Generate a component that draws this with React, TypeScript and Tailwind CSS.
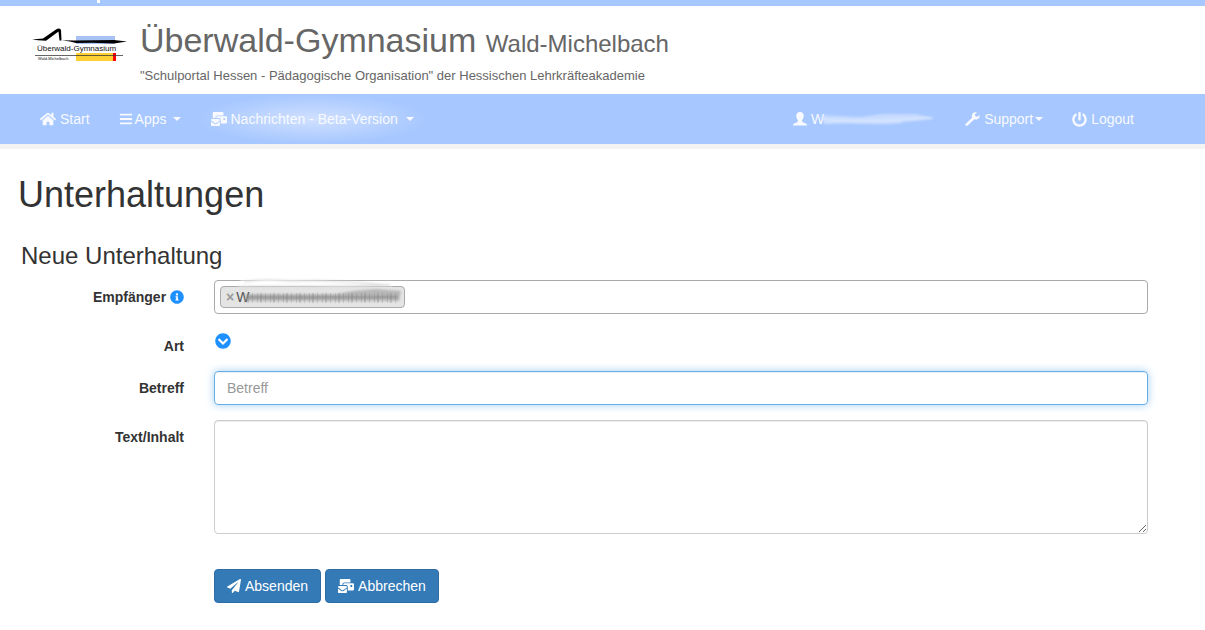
import {
  FaBars,
  FaChevronCircleDown,
  FaHome,
  FaInfoCircle,
  FaMailBulk,
  FaPaperPlane,
  FaPowerOff,
} from "react-icons/fa";

const navLink = "flex h-[50px] items-center whitespace-nowrap hover:underline";
const formLabel = "w-[184px] shrink-0 pt-[7px] text-right font-bold";
const button =
  "flex h-[34px] items-center gap-1 rounded border border-[#2e6da4] bg-[#337ab7] px-3 text-white hover:bg-[#286090]";

function Caret() {
  return (
    <span
      className="border-x-4 border-t-4 border-x-transparent border-t-current"
      aria-hidden
    />
  );
}

function SchoolLogo() {
  return (
    <svg
      viewBox="0 0 96 38"
      className="h-[38px] w-[96px] shrink-0"
      role="img"
      aria-label="Überwald-Gymnasium"
    >
      <rect x="44" y="9" width="39" height="8" fill="#a6c1f2" />
      <rect x="44" y="26" width="39" height="8" fill="#ffd034" />
      <rect x="81" y="26" width="3" height="8" fill="#f00" />
      <path d="M0 12.500 L11 11.500 L24 2.500 Q27.500 0.500 29 3 L29.500 13.500 L27.500 13.500 L26.500 4.500 L14 13.800 L6 13.300 Z" />
      <path d="M30 13.200 L43 13.500 L82 13 L95 14.500 L82 16.500 L60 15.800 L44 16 L38 14.600 Z" />
      <path d="M3 28.500 H91" stroke="#333" strokeWidth="1" opacity=".75" />
      <text x="5" y="24" fontSize="8" fontFamily="Liberation Sans" fill="#111">
        Überwald-Gymnasium
      </text>
      <text x="6" y="33" fontSize="4" fontFamily="Liberation Sans" fill="#111">
        Wald-Michelbach
      </text>
    </svg>
  );
}

function UserIcon() {
  return (
    <svg viewBox="0 0 14 14" className="size-[14px]" fill="currentColor" aria-hidden>
      <path d="M7 0C4.600 0 3.300 1.400 3.300 3.700c0 1.900.6 3.400 1.600 4.400v1.100c0 .5-.3.800-.8 1L1 11.600C.3 12 0 12.400 0 13v.6h14V13c0-.6-.3-1-1-1.400l-3.100-1.400c-.5-.2-.8-.5-.8-1V8.100c1-1 1.600-2.500 1.600-4.400C10.700 1.400 9.400 0 7 0Z" />
    </svg>
  );
}

function WrenchIcon() {
  return (
    <svg viewBox="0 0 15 14" className="mr-1 h-[14px] w-[15px]" fill="currentColor" aria-hidden>
      <path d="M.5 11.900 7 5.700C6.300 3.500 7.200 1.300 9.100.5c1-.4 2-.4 2.800-.1L9.900 2.300l.4 2 2.100.5 2.100-1.900c.4 1.700-.2 3.300-1.600 4.100-1.100.7-2.400.7-3.600.3L2.700 13.600c-.5.500-1.300.5-1.800 0l-.4-.4c-.4-.4-.4-.9 0-1.300Z" />
    </svg>
  );
}

function NavSmudge() {
  return (
    <svg viewBox="0 0 116 16" className="-ml-1 h-4 w-[116px]" fill="none" aria-hidden>
      <defs>
        <filter id="navBlur" x="-10%" y="-50%" width="120%" height="200%">
          <feGaussianBlur stdDeviation="1" />
        </filter>
      </defs>
      <g filter="url(#navBlur)">
        <path
          d="M0 4 L40 6 L62 3 L96 3 L115 7 L96 10 L62 13 L30 12 L4 12 Z"
          fill="#d4e3ff"
          opacity=".7"
        />
        <path d="M2 8 C30 11 60 9 112 7" stroke="#d8e6ff" strokeWidth="2" />
        <path d="M4 12 C35 10 55 13 82 11" stroke="#d0e1ff" strokeWidth="2" />
      </g>
    </svg>
  );
}

function RecipientSmudge() {
  return (
    <svg
      viewBox="0 0 178 34"
      className="pointer-events-none absolute -top-[9px] left-[15px] h-[34px] w-[178px]"
      fill="none"
      aria-hidden
    >
      <defs>
        <filter id="tagBlur" x="-5%" y="-50%" width="110%" height="200%">
          <feGaussianBlur stdDeviation="1" />
        </filter>
      </defs>
      <g filter="url(#tagBlur)">
        <path d="M4 5 C45 0 105 8 156 6" stroke="#fff" strokeWidth="4" />
        <path d="M8 4 C35 -1 48 4 65 3 S120 4 150 7" stroke="#ccc" strokeWidth="1" />
        <path d="M2 9 C40 8 90 10 154 7" stroke="#dcdcdc" strokeWidth="2" />
        <path
          d="M10 16 L100 16 L118 13 L140 11 L165 13 L163 23 L120 23 L10 23 Z"
          fill="#a4a4a4"
          opacity=".7"
        />
        <path d="M10 19 C50 20 90 19 162 19" stroke="#777" strokeWidth="2" opacity=".6" />
      </g>
      <path
        d="M8 20 H164"
        stroke="#777"
        strokeWidth="10"
        strokeDasharray="1 2 2 3 1 4"
        opacity=".25"
      />
    </svg>
  );
}

export default function App() {
  return (
    <div className="min-h-screen bg-white font-['Liberation_Sans',Arial,sans-serif] text-sm text-[#333]">
      <div className="h-1.5 bg-[#a6c7ff] pl-[97px]">
        <div className="h-[3px] w-[3px] bg-white" />
      </div>

      <header className="flex h-[88px] gap-3 pl-8 text-[#666]">
        <div className="pt-[21px]">
          <SchoolLogo />
        </div>
        <div className="pt-[14px]">
          <h1 className="text-[34px] leading-10 whitespace-nowrap">
            Überwald-Gymnasium{" "}
            <small className="text-2xl leading-8">Wald-Michelbach</small>
          </h1>
          <p className="pt-1.5 text-[13px] leading-5">
            "Schulportal Hessen - Pädagogische Organisation" der Hessischen
            Lehrkräfteakademie
          </p>
        </div>
      </header>

      <nav className="flex justify-between border-b-[5px] border-[#f3f3f3] bg-[#a6c7ff] pr-[71px] pl-10 text-[#f8faff]">
        <div className="flex">
          <a href="#start" className={`${navLink} mr-[29px] gap-1`}>
            <FaHome className="size-4" />
            Start
          </a>
          <a href="#apps" className={`${navLink} mr-[15px] gap-1.5`}>
            <span className="flex items-center gap-[2px]">
              <FaBars className="size-[14px]" />
              Apps
            </span>
            <Caret />
          </a>
          <a
            href="#nachrichten"
            className={`${navLink} gap-2 bg-[radial-gradient(closest-side,#d0e0ff,#a6c7ff)] px-[15px]`}
          >
            <span className="flex items-center gap-1">
              <FaMailBulk className="size-4" />
              Nachrichten - Beta-Version
            </span>
            <Caret />
          </a>
        </div>
        <div className="flex gap-[29px]">
          <a href="#profil" className={`${navLink} gap-1`}>
            <UserIcon />
            <span className="flex items-center">
              W
              <NavSmudge />
            </span>
          </a>
          <a href="#support" className={navLink}>
            <WrenchIcon />
            Support
            <span className="ml-0.5 flex">
              <Caret />
            </span>
          </a>
          <a href="#logout" className={`${navLink} gap-1`}>
            <FaPowerOff className="size-[15px]" />
            Logout
          </a>
        </div>
      </nav>

      <main className="pt-[26px] pr-[57px]">
        <h1 className="pl-[18px] text-4xl leading-10">Unterhaltungen</h1>
        <h2 className="pt-7 pl-[21px] text-2xl leading-[26px]">
          Neue Unterhaltung
        </h2>

        <form className="pt-[11px]" onSubmit={(e) => e.preventDefault()}>
          <div className="flex gap-[30px]">
            <label htmlFor="empfaenger" className={formLabel}>
              Empfänger{" "}
              <FaInfoCircle className="inline size-[14px] align-[-2px] text-[#1e90ff]" />
            </label>
            <div className="flex h-[34px] flex-1 items-center rounded border border-[#aaa] pl-[5px]">
              <span className="relative flex h-[22px] w-[185px] items-center rounded border border-[#aaa] bg-[#e4e4e4] pl-[5px] text-[#555]">
                <button
                  type="button"
                  aria-label="Entfernen"
                  className="mr-0.5 font-bold text-[#999]"
                >
                  ×
                </button>
                W
                <RecipientSmudge />
              </span>
              <input
                id="empfaenger"
                type="search"
                className="min-w-0 flex-1 px-1 outline-none"
              />
            </div>
          </div>

          <div className="flex gap-[30px] pt-[15px]">
            <span className={formLabel}>Art</span>
            <button
              type="button"
              aria-label="Art auswählen"
              className="mt-1 ml-px size-4 text-[#1e90ff]"
            >
              <FaChevronCircleDown className="size-4" />
            </button>
          </div>

          <div className="flex gap-[30px] pt-[15px]">
            <label htmlFor="betreff" className={formLabel}>
              Betreff
            </label>
            <input
              id="betreff"
              type="text"
              placeholder="Betreff"
              autoFocus
              className="h-[34px] min-w-0 flex-1 rounded border border-[#66afe9] px-3 shadow-[inset_0_1px_1px_rgba(0,0,0,0.075),0_0_8px_rgba(102,175,233,0.6)] outline-none placeholder:text-[#999]"
            />
          </div>

          <div className="flex gap-[30px] pt-[15px]">
            <label htmlFor="inhalt" className={formLabel}>
              Text/Inhalt
            </label>
            <textarea
              id="inhalt"
              rows={5}
              className="h-[114px] min-w-0 flex-1 rounded border border-[#ccc] px-3 py-1.5 shadow-[inset_0_1px_1px_rgba(0,0,0,0.075)] outline-none"
            />
          </div>

          <div className="flex gap-1 pt-[35px] pl-[214px]">
            <button type="submit" className={button}>
              <FaPaperPlane className="size-[14px]" />
              Absenden
            </button>
            <button type="button" className={button}>
              <FaMailBulk className="size-4" />
              Abbrechen
            </button>
          </div>
        </form>
      </main>
    </div>
  );
}
